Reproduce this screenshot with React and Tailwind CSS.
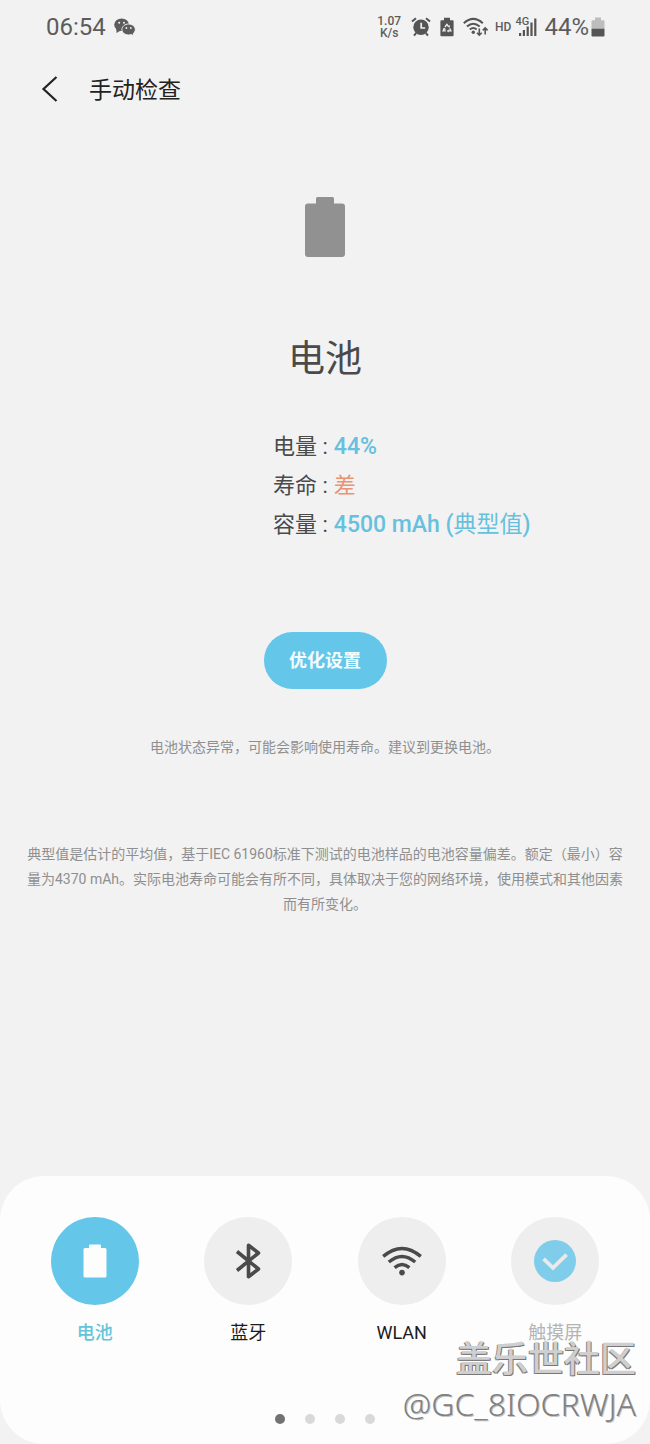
import clsx from 'clsx'

function WeChatIcon() {
  return (
    <svg width="22" height="18" viewBox="0 0 22 18" aria-hidden="true">
      <g fill="#5c5c5c">
        <ellipse cx="7.600" cy="6.800" rx="7.400" ry="6.300" />
        <path d="M2.200 10.500 2.600 15l4-2.400z" />
      </g>
      <g fill="#5c5c5c" stroke="#f2f2f2" strokeWidth="1">
        <path d="M14.600 6c3.800 0 6.700 2.500 6.700 5.600 0 1.800-.9 3.200-2.200 4.200l.4 2-2.300-1.200c-.8.300-1.700.4-2.600.4-3.800 0-6.700-2.400-6.700-5.400S10.800 6 14.600 6z" />
      </g>
      <g fill="#f2f2f2">
        <circle cx="5.200" cy="4.800" r="1" />
        <circle cx="10" cy="4.800" r="1" />
        <circle cx="12.400" cy="10" r=".9" />
        <circle cx="16.800" cy="10" r=".9" />
      </g>
    </svg>
  )
}

function AlarmIcon() {
  return (
    <svg width="20" height="20" viewBox="0 0 20 20" aria-hidden="true">
      <g fill="none" stroke="#555" strokeWidth="2">
        <path d="M1 4.6 5 1.2M19 4.6 15 1.2" />
        <path d="M5.2 16 3 18.6M14.8 16 17 18.6" />
      </g>
      <circle cx="10" cy="10.3" r="7.7" fill="#555" />
      <path d="M10.2 5.8v5.2h4" fill="none" stroke="#f2f2f2" strokeWidth="1.7" />
    </svg>
  )
}

function PowerSavingIcon() {
  return (
    <svg width="14" height="20" viewBox="0 0 14 20" aria-hidden="true">
      <path d="M4 .8h6v2.4h2.6q1 0 1 1v14q0 1-1 1H1.4q-1 0-1-1v-14q0-1 1-1H4z" fill="#555" />
      <g fill="none" stroke="#f2f2f2" strokeWidth="1.3">
        <path d="M5 10 6.900 7.400 8.600 9.600" />
        <path d="M9.700 11.200 10.900 13.900H8.200" />
        <path d="M5.800 13.900H3.100L4.300 11.400" />
      </g>
      <path d="m7.400 10 2.400.4.100-2.400zM8.700 12.300v3.200l-1.900-1.600zM2.800 11.800l2.300-.9.600 2.300z" fill="#f2f2f2" />
    </svg>
  )
}

function WifiTransferIcon() {
  return (
    <svg width="26" height="20" viewBox="0 0 26 20" aria-hidden="true">
      <g fill="none" stroke="#555" strokeWidth="2">
        <path d="M.8 6.2Q10.3-2.4 19.8 6.2" />
        <path d="M3.9 9.5Q10.3 3.9 16.7 9.5" />
        <path d="M6.8 12.6Q10.3 9.6 13.6 12.4" />
      </g>
      <circle cx="10.3" cy="15.3" r="1.7" fill="#555" />
      <g fill="none" stroke="#555" strokeWidth="1.6">
        <path d="M16.3 11.4v6.6M13.9 15.7l2.4 2.5 2.4-2.5" />
        <path d="M22.2 17.4v-6.2M19.8 13.4l2.4-2.5 2.4 2.5" />
      </g>
    </svg>
  )
}

function SignalIcon() {
  return (
    <svg width="18" height="18" viewBox="0 0 18 18" aria-hidden="true">
      <path d="M0 15h2.200v3H0zM3.800 12H6v6H3.800zM7.600 8.600h2.200V18H7.600zM11.400 4.600h2.200V18h-2.200zM15.200.500h2.200V18h-2.200z" fill="#555" />
    </svg>
  )
}

function StatusBatteryIcon() {
  return (
    <svg width="14" height="20" viewBox="0 0 14 20" aria-hidden="true">
      <path d="M4 .5h6v2.8h2.5q1 0 1 1V12H.5V4.300q0-1 1-1H4z" fill="#bdbdbd" />
      <path d="M.5 11.800h13v6.700q0 1-1 1h-11q-1 0-1-1z" fill="#555" />
    </svg>
  )
}

function BatteryIcon({ className }) {
  return (
    <svg className={className} viewBox="0 0 40 60" fill="currentColor" aria-hidden="true">
      <path d="M12.500 0h15q1.500 0 1.500 1.500V6.500h8q3 0 3 3V57q0 3-3 3H3q-3 0-3-3V9.500q0-3 3-3h8V1.500q0-1.500 1.500-1.500z" />
    </svg>
  )
}

function SmallBatteryIcon() {
  return (
    <svg width="24" height="34" viewBox="0 0 24 34" fill="#fdfdfd" aria-hidden="true">
      <path d="M7 .5h10q1 0 1 1V4h4q1.500 0 1.500 1.500v26.500q0 1.500-1.500 1.500H2Q.5 33.500.5 32V5.500Q.5 4 2 4h4V1.500q0-1 1-1z" />
    </svg>
  )
}

function BluetoothIcon() {
  return (
    <svg width="26" height="38" viewBox="0 0 26 38" aria-hidden="true">
      <path
        d="M2 9.500 23.500 27 13.500 34.700V3.300L23.500 11 2 28.500"
        fill="none"
        stroke="#4a4a4a"
        strokeWidth="3.600"
        strokeLinejoin="round"
      />
    </svg>
  )
}

function WlanIcon() {
  return (
    <svg width="40" height="30" viewBox="0 0 40 30" aria-hidden="true">
      <g fill="none" stroke="#4a4a4a" strokeWidth="3.400">
        <path d="M1.200 10.400Q20-5.600 38.800 10.400" />
        <path d="M6.800 16Q20 4.800 33.200 16" />
        <path d="M12.600 21.600Q20 15.400 27.400 21.600" />
      </g>
      <circle cx="20" cy="26.600" r="2.800" fill="#4a4a4a" />
    </svg>
  )
}

function CheckedIcon() {
  return (
    <svg width="42" height="42" viewBox="0 0 42 42" aria-hidden="true">
      <circle cx="21" cy="21" r="21" fill="#7fcdea" />
      <path d="M9.600 18.800 19 27.800 32.600 14.600" fill="none" stroke="#eaeaea" strokeWidth="3.800" />
    </svg>
  )
}

const tabs = [
  { id: 'battery', label: '电池', icon: <SmallBatteryIcon />, circle: 'bg-[#64c6e9]', text: 'font-medium text-[#66c4d8]' },
  { id: 'bluetooth', label: '蓝牙', icon: <BluetoothIcon />, circle: 'bg-[#eeeeee]', text: 'text-[#1c1c1c]' },
  { id: 'wlan', label: 'WLAN', icon: <WlanIcon />, circle: 'bg-[#eeeeee]', text: 'text-[#1c1c1c]' },
  { id: 'touch', label: '触摸屏', icon: <CheckedIcon />, circle: 'bg-[#eeeeee]', text: 'text-[#b4b4b4]' },
]

function StatusBar() {
  return (
    <div className="flex h-[54px] items-center justify-between pl-[46px] pr-[45px] text-[#5c5c5c]">
      <div className="flex items-center gap-2">
        <span className="text-2xl">06:54</span>
        <WeChatIcon />
      </div>
      <div className="flex items-center">
        <div className="mr-2.5 text-center text-xs font-medium leading-3">
          <p>1.07</p>
          <p>K/s</p>
        </div>
        <div className="mr-1.5 flex items-center gap-[9px]">
          <AlarmIcon />
          <PowerSavingIcon />
          <WifiTransferIcon />
        </div>
        <span className="mr-2 text-xs font-medium">HD</span>
        <div className="relative mr-[7px]">
          <SignalIcon />
          <span className="absolute -left-1 -top-0.5 text-[11px] font-medium leading-3">4G</span>
        </div>
        <span className="mr-0.5 text-2xl">44%</span>
        <StatusBatteryIcon />
      </div>
    </div>
  )
}

function Stat({ label, children }) {
  return (
    <div className="flex gap-1.5">
      <dt className="text-[#4a4a4a]">{label} :</dt>
      {children}
    </div>
  )
}

export default function App() {
  return (
    <div className="flex min-h-screen flex-col bg-[#f2f2f2] font-[Roboto,'Noto_Sans_CJK_SC',sans-serif]">
      <StatusBar />

      <header className="flex h-[70px] items-center pl-[41px]">
        <button type="button" aria-label="返回" className="cursor-pointer">
          <svg width="17" height="26" viewBox="0 0 17 26" fill="none" stroke="#222" strokeWidth="2.200" aria-hidden="true">
            <path d="M15.500 1 2.500 13l13 12" />
          </svg>
        </button>
        <h1 className="ml-[31px] pt-1 text-[23px] text-[#222]">手动检查</h1>
      </header>

      <main className="flex flex-col items-center">
        <BatteryIcon className="mt-[73px] h-[60px] w-10 text-[#919191]" />
        <h2 className="mt-[83px] text-[37px] leading-10 text-[#4a4a4a]">电池</h2>

        <dl className="mt-[47px] w-full pl-[42%] text-[22px] leading-[39px]">
          <Stat label="电量">
            <dd className="text-[23px] font-medium text-[#66c0de]">44%</dd>
          </Stat>
          <Stat label="寿命">
            <dd className="text-[#ea9274]">差</dd>
          </Stat>
          <Stat label="容量">
            <dd className="text-[23px] text-[#66c0de]">
              <span className="font-medium">4500 mAh (</span>
              典型值
              <span className="font-medium">)</span>
            </dd>
          </Stat>
        </dl>

        <button
          type="button"
          className="mt-[88px] h-[57px] w-[123px] cursor-pointer rounded-full bg-[#64c6e9] text-lg font-bold text-[#f4fcff]"
        >
          优化设置
        </button>

        <p className="mt-[46px] text-center text-sm leading-[25px] text-[#8f8f8f]">
          电池状态异常，可能会影响使用寿命。建议到更换电池。
        </p>
        <p className="mt-[82px] px-6 text-center text-sm leading-[25px] text-[#8f8f8f]">
          典型值是估计的平均值，基于IEC 61960标准下测试的电池样品的电池容量偏差。额定（最小）容量为4370
          mAh。实际电池寿命可能会有所不同，具体取决于您的网络环境，使用模式和其他因素而有所变化。
        </p>
      </main>

      <footer className="relative mt-auto rounded-[44px] bg-[#fdfdfd] px-[18px] pb-5 pt-[41px]">
        <nav className="grid grid-cols-4">
          {tabs.map((tab) => (
            <button key={tab.id} type="button" className="flex cursor-pointer flex-col items-center">
              <span className={clsx('flex h-[88px] w-[88px] items-center justify-center rounded-full', tab.circle)}>
                {tab.icon}
              </span>
              <span className={clsx('mt-4 text-lg leading-6', tab.text)}>{tab.label}</span>
            </button>
          ))}
        </nav>
        <div className="mt-[69px] flex justify-center gap-5">
          <span className="h-2.5 w-2.5 rounded-full bg-[#727272]" />
          <span className="h-2.5 w-2.5 rounded-full bg-[#d9d9d9]" />
          <span className="h-2.5 w-2.5 rounded-full bg-[#d9d9d9]" />
          <span className="h-2.5 w-2.5 rounded-full bg-[#d9d9d9]" />
        </div>

        {/* community watermark, lies over the sheet */}
        <div className="pointer-events-none absolute bottom-4 right-3.5 text-right">
          <p className="text-4xl font-medium leading-10 text-[#cfcfcf] [text-shadow:1px_1px_0_#777,-1px_1px_0_#888]">
            盖乐世社区
          </p>
          <p className="font-['Noto_Sans',sans-serif] text-[32px] font-light leading-[48px] text-[#808080] [text-shadow:1px_1px_0_#c4c4c4]">
            @GC_8IOCRWJA
          </p>
        </div>
      </footer>
    </div>
  )
}
